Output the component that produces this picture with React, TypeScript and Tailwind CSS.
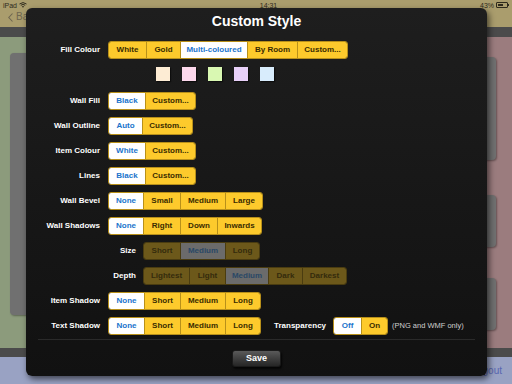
import React from "react";

type Opt = { t: string; w: number; sel?: boolean };

function Group({ opts, dim = false }: { opts: Opt[]; dim?: boolean }) {
  return (
    <div
      className={
        "flex h-[18px] rounded-[3px] overflow-hidden border " +
        (dim ? "border-[#4a3c10]" : "border-[#b8901a]")
      }
    >
      {opts.map((o, i) => {
        let cls = "flex items-center justify-center text-[8px] font-bold leading-none h-full ";
        if (i > 0) cls += dim ? "border-l border-[#4a3c10] " : "border-l border-[#b8901a] ";
        if (o.sel) {
          cls += dim ? "bg-[#6b6b6b] text-[#2a4866] " : "bg-white text-[#1a74cc] ";
        } else {
          cls += dim ? "bg-[#6c581a] text-[#342b0c] " : "bg-[#fdca2c] text-[#3a2c00] ";
        }
        return (
          <div key={i} className={cls} style={{ width: o.w - (i > 0 ? 0 : 1) }}>
            {o.t}
          </div>
        );
      })}
    </div>
  );
}

function Row({ label, children, wide = false }: { label: string; children: React.ReactNode; wide?: boolean }) {
  return (
    <div className="flex items-center h-[18px] mt-[7px]">
      <div
        className={
          "text-right text-white text-[8px] font-bold leading-none " + (wide ? "w-[110px] mr-[7px]" : "w-[74px] mr-[8px]")
        }
      >
        {label}
      </div>
      {children}
    </div>
  );
}

export default function App() {
  return (
    <div className="relative w-[512px] h-[384px] overflow-hidden font-['Liberation_Sans',Arial,sans-serif]">
      {/* background page */}
      <div className="flex flex-col w-full h-full">
        <div className="h-[27px] bg-[#aa9d6d] relative shrink-0">
          <div className="flex items-center justify-between px-[3px] h-[10px] text-[7px] text-[#2e2a1c] leading-none">
            <div className="flex items-center gap-[2px]">
              <span>iPad</span>
              <svg width="8" height="6" viewBox="0 0 8 6">
                <path d="M0.5 2 Q4 -0.8 7.5 2" stroke="#2e2a1c" strokeWidth="1" fill="none" />
                <path d="M1.8 3.3 Q4 1.5 6.2 3.3" stroke="#2e2a1c" strokeWidth="1" fill="none" />
                <path d="M4 5.8 L2.9 4.5 Q4 3.6 5.1 4.5 Z" fill="#2e2a1c" />
              </svg>
            </div>
            <span className="ml-[30px]">14:31</span>
            <div className="flex items-center gap-[2px]">
              <span>43%</span>
              <div className="flex items-center">
                <div className="w-[12px] h-[6px] border border-[#2e2a1c] rounded-[1px] p-[1px]">
                  <div className="w-[5px] h-full bg-[#2e2a1c]" />
                </div>
                <div className="w-[1px] h-[2px] bg-[#2e2a1c]" />
              </div>
            </div>
          </div>
          <div className="flex items-center gap-[3px] pl-[8px] mt-[2px] text-[#6e6650] text-[10px] leading-none">
            <svg width="5" height="9" viewBox="0 0 5 9">
              <path d="M4.5 0.5 L0.8 4.5 L4.5 8.5" stroke="#6e6650" strokeWidth="1.1" fill="none" />
            </svg>
            <span>Back</span>
          </div>
        </div>
        <div className="h-[10px] bg-[#4b4b4b] shrink-0" />
        <div className="flex h-[311px] shrink-0">
          <div className="w-1/2 bg-[#8c9b7c] pl-[10px] pt-[16px]">
            <div className="w-[80px] h-[262px] bg-[#707070] rounded-[4px] shadow-[1px_1px_2px_rgba(0,0,0,0.35)]" />
          </div>
          <div className="w-1/2 bg-[#9b7c7e] flex flex-col items-end pr-[16px] pt-[20px]">
            <div className="w-[80px] h-[103px] bg-[#707070] rounded-[4px] shadow-[1px_1px_2px_rgba(0,0,0,0.35)]" />
            <div className="w-[80px] h-[52px] mt-[35px] bg-[#707070] rounded-[4px] shadow-[1px_1px_2px_rgba(0,0,0,0.35)]" />
            <div className="w-[80px] h-[52px] mt-[31px] bg-[#707070] rounded-[4px] shadow-[1px_1px_2px_rgba(0,0,0,0.35)]" />
          </div>
        </div>
        <div className="h-[9px] bg-[#4b4b4b] shrink-0" />
        <div className="flex-1 bg-[#99a2c3] flex justify-end items-center pr-[10px] text-[#5866b0] text-[10px]">
          Logout
        </div>
      </div>

      {/* modal */}
      <div className="absolute left-[26px] top-[8px] w-[461px] h-[368px] rounded-[6px] bg-gradient-to-b from-[#1e1e1e] to-[#111111] shadow-[2px_3px_6px_rgba(0,0,0,0.6)] flex flex-col">
        <div className="h-[18px] mt-[4px] flex items-center justify-center text-white text-[14px] font-bold leading-none">
          Custom Style
        </div>
        <div className="flex items-center h-[18px] mt-[11px]">
          <div className="w-[74px] mr-[8px] text-right text-white text-[8px] font-bold leading-none">Fill Colour</div>
          <Group
            opts={[
              { t: "White", w: 38 },
              { t: "Gold", w: 34 },
              { t: "Multi-coloured", w: 67, sel: true },
              { t: "By Room", w: 50 },
              { t: "Custom...", w: 50 },
            ]}
          />
        </div>
        <div className="flex ml-[130px] gap-[12px] mt-[8px] h-[14px]">
          {["#fdecd4", "#fcd8ec", "#d9f8b2", "#e8d0f8", "#d8ecfc"].map((c) => (
            <div key={c} className="w-[14px] h-[14px] shadow-[1px_1px_1px_rgba(0,0,0,0.5)]" style={{ background: c }} />
          ))}
        </div>
        <div className="mt-[4px]" />
        <Row label="Wall Fill">
          <Group opts={[{ t: "Black", w: 37, sel: true }, { t: "Custom...", w: 50 }]} />
        </Row>
        <Row label="Wall Outline">
          <Group opts={[{ t: "Auto", w: 34, sel: true }, { t: "Custom...", w: 50 }]} />
        </Row>
        <Row label="Item Colour">
          <Group opts={[{ t: "White", w: 37, sel: true }, { t: "Custom...", w: 50 }]} />
        </Row>
        <Row label="Lines">
          <Group opts={[{ t: "Black", w: 37, sel: true }, { t: "Custom...", w: 50 }]} />
        </Row>
        <Row label="Wall Bevel">
          <Group
            opts={[
              { t: "None", w: 35, sel: true },
              { t: "Small", w: 37 },
              { t: "Medium", w: 45 },
              { t: "Large", w: 37 },
            ]}
          />
        </Row>
        <Row label="Wall Shadows">
          <Group
            opts={[
              { t: "None", w: 35, sel: true },
              { t: "Right", w: 37 },
              { t: "Down", w: 37 },
              { t: "Inwards", w: 44 },
            ]}
          />
        </Row>
        <Row label="Size" wide>
          <Group dim opts={[{ t: "Short", w: 37 }, { t: "Medium", w: 45, sel: true }, { t: "Long", w: 34 }]} />
        </Row>
        <Row label="Depth" wide>
          <Group
            dim
            opts={[
              { t: "Lightest", w: 46 },
              { t: "Light", w: 36 },
              { t: "Medium", w: 43, sel: true },
              { t: "Dark", w: 34 },
              { t: "Darkest", w: 44 },
            ]}
          />
        </Row>
        <Row label="Item Shadow">
          <Group
            opts={[
              { t: "None", w: 36, sel: true },
              { t: "Short", w: 36 },
              { t: "Medium", w: 45 },
              { t: "Long", w: 35 },
            ]}
          />
        </Row>
        <Row label="Text Shadow">
          <Group
            opts={[
              { t: "None", w: 36, sel: true },
              { t: "Short", w: 36 },
              { t: "Medium", w: 45 },
              { t: "Long", w: 35 },
            ]}
          />
          <div className="ml-[13px] mr-[7px] text-white text-[8px] font-bold leading-none">Transparency</div>
          <Group opts={[{ t: "Off", w: 28, sel: true }, { t: "On", w: 26 }]} />
          <div className="ml-[4px] text-[#cfcfcf] text-[7.5px] leading-none">(PNG and WMF only)</div>
        </Row>
        <div className="mt-[4px] mx-[12px] h-px bg-[#2a2a2a]" />
        <div className="flex justify-center mt-[10px]">
          <div className="w-[49px] h-[17px] rounded-[3px] bg-gradient-to-b from-[#5a5a5a] to-[#262626] border border-[#1a1a1a] shadow-[1px_2px_2px_rgba(0,0,0,0.7)] flex items-center justify-center text-white text-[9px] font-bold leading-none">
            Save
          </div>
        </div>
      </div>
    </div>
  );
}
